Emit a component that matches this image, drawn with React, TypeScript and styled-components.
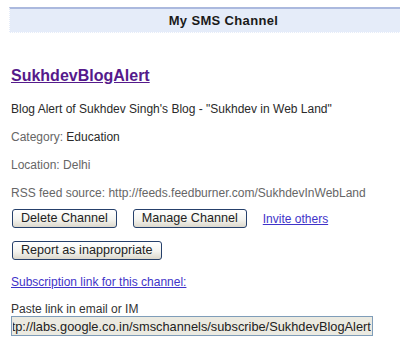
import React, { useEffect, useRef } from 'react';
import styled, { createGlobalStyle } from 'styled-components';

const GlobalStyle = createGlobalStyle`
  html, body {
    margin: 0;
    padding: 0;
    background: #ffffff;
  }
  body {
    font-family: "Liberation Sans", Arial, sans-serif;
  }
`;

const Page = styled.div`
  width: 400px;
  height: 360px;
  overflow: hidden;
  box-sizing: border-box;
  padding: 7px 0 0 9px;
`;

const Header = styled.div`
  height: 22px;
  padding: 1px 0 0 37px;
  border-top: 2px solid #abb9de;
  border-bottom: 1px dotted #ffffff;
  border-left: 1px dotted #ffffff;
  background: #e5ecf9;
  text-align: center;
  font-size: 13px;
  font-weight: bold;
  letter-spacing: 0.35px;
  line-height: 22px;
  color: #1a1a1a;
`;

const Content = styled.div`
  padding-left: 2px;
  font-size: 12px;
  color: #333333;
`;

const Title = styled.h2`
  margin: 34px 0 0;
  font-size: 16px;
  font-weight: bold;
  line-height: 18px;

  a {
    color: #551a8b;
    text-decoration: underline;
  }
`;

const Line = styled.p<{ $first?: boolean }>`
  margin: ${(p) => (p.$first ? '16px' : '12px')} 0 0;
  line-height: 16px;
  white-space: nowrap;
`;

const Label = styled.span<{ $tone?: 'dark' | 'muted' }>`
  color: ${(p) => (p.$tone === 'dark' ? '#2a2a2a' : '#666666')};
`;

const ButtonRow = styled.div<{ $top: number }>`
  display: flex;
  align-items: center;
  gap: 16px;
  margin-top: ${(p) => p.$top}px;
  padding-left: 1px;
`;

const Button = styled.button`
  height: 19px;
  padding: 0 8px;
  border: 1px solid #26406b;
  border-radius: 3px;
  background: linear-gradient(#ffffff, #f4f4f0 55%, #dcd8cc);
  font-family: inherit;
  font-size: 12.6px;
  line-height: 17px;
  color: #222222;
  cursor: pointer;
`;

const Link = styled.a`
  color: #3f33c9;
  text-decoration: underline;
  line-height: 16px;
`;

const LinkLine = styled.div`
  margin-top: 14px;
  line-height: 16px;
`;

const Hint = styled.div`
  margin-top: 12px;
  line-height: 14px;
  color: #333333;
`;

const Field = styled.input`
  display: block;
  width: 362px;
  height: 20px;
  box-sizing: border-box;
  margin: 0;
  padding: 0 1px;
  border: 1px solid #7f9db9;
  background: #ebeae1;
  font-family: "Liberation Sans", Arial, sans-serif;
  font-size: 12.8px;
  color: #222222;
  outline: none;
`;

const subscribeUrl = 'http://labs.google.co.in/smschannels/subscribe/SukhdevBlogAlert';

export default function App() {
  const fieldRef = useRef<HTMLInputElement>(null);

  useEffect(() => {
    const el = fieldRef.current;
    if (el) el.scrollLeft = el.scrollWidth;
  }, []);

  return (
    <Page>
      <GlobalStyle />
      <Header>My SMS Channel</Header>
      <Content>
        <Title>
          <a href="#">SukhdevBlogAlert</a>
        </Title>
        <Line $first>
          <Label $tone="dark">Blog Alert of Sukhdev Singh's Blog - "Sukhdev in Web Land"</Label>
        </Line>
        <Line>
          <Label>Category: </Label>
          <Label $tone="dark">Education</Label>
        </Line>
        <Line>
          <Label>Location: Delhi</Label>
        </Line>
        <Line>
          <Label>RSS feed source: http://feeds.feedburner.com/SukhdevInWebLand</Label>
        </Line>
        <ButtonRow $top={8}>
          <Button>Delete Channel</Button>
          <Button>Manage Channel</Button>
          <Link href="#">Invite others</Link>
        </ButtonRow>
        <ButtonRow $top={13}>
          <Button>Report as inappropriate</Button>
        </ButtonRow>
        <LinkLine>
          <Link href="#">Subscription link for this channel:</Link>
        </LinkLine>
        <Hint>Paste link in email or IM</Hint>
        <Field ref={fieldRef} readOnly value={subscribeUrl} />
      </Content>
    </Page>
  );
}
